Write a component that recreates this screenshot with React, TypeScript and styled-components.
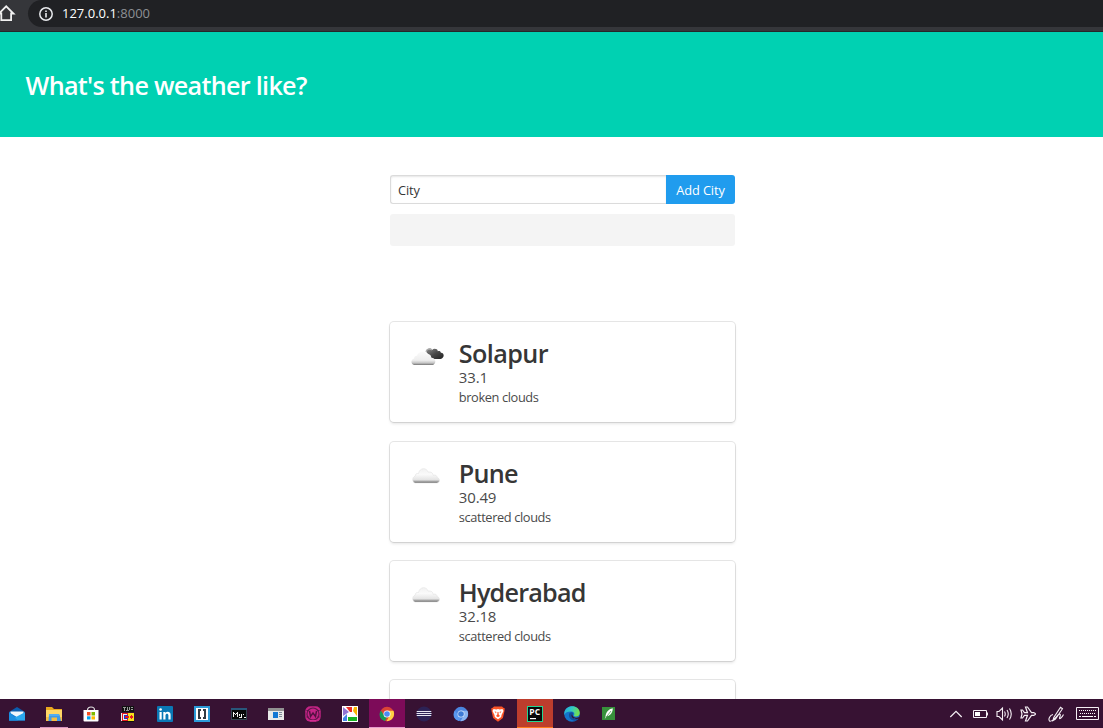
import React from "react";
import styled, { createGlobalStyle } from "styled-components";

const Global = createGlobalStyle`
  * { box-sizing: border-box; }
  html, body { margin: 0; height: 100%; overflow: hidden; }
  body { font-family: "Open Sans", "Noto Sans", sans-serif; background: #fff; color: #4a4a4a; }
  svg { display: block; flex: none; }
`;

const Screen = styled.div`
  width: 1103px;
  height: 728px;
  display: flex;
  flex-direction: column;
  overflow: hidden;
`;

const BrowserBar = styled.div`
  flex: none;
  height: 32px;
  display: flex;
  align-items: flex-start;
  background: #35363a;
  border-bottom: 1px solid #25262a;
`;

const HomeButton = styled.div`
  width: 28px;
  height: 27px;
  padding-top: 4px;
`;

const AddressBar = styled.div`
  flex: 1;
  height: 27px;
  display: flex;
  align-items: center;
  gap: 9px;
  padding-left: 11px;
  background: #202124;
  border-radius: 14px 0 0 14px;
`;

const Address = styled.div`
  font-size: 13px;
  line-height: 18px;
  padding-bottom: 2px;
  letter-spacing: 0;
  color: #fff;
`;

const Port = styled.span`
  color: #8d9094;
`;

const Hero = styled.header`
  flex: none;
  height: 105px;
  display: flex;
  align-items: center;
  padding: 1px 0 0 25.6px;
  background: #00d1b2;
`;

const HeroTitle = styled.h1`
  margin: 0;
  font-size: 25.2px;
  line-height: 29px;
  font-weight: 600;
  letter-spacing: -0.72px;
  color: #fff;
`;

const Page = styled.main`
  flex: 1;
  min-height: 0;
  overflow: hidden;
  display: flex;
  flex-direction: column;
  align-items: center;
  padding: 38px 0 0 22px;
`;

const CityForm = styled.div`
  flex: none;
  width: 345px;
  height: 29px;
  display: flex;
`;

const CityField = styled.div`
  flex: 1;
  border: 1px solid #dbdbdb;
  border-right: 0;
  border-radius: 3px 0 0 3px;
  box-shadow: inset 0 1px 2px rgba(10, 10, 10, 0.1);
  padding: 1px 0 0 7px;
  font-size: 12.8px;
  line-height: 27px;
  letter-spacing: -0.1px;
  color: #363636;
`;

const AddButton = styled.button`
  width: 69px;
  border: 0;
  border-radius: 0 3px 3px 0;
  padding: 1px 0 0;
  background: #209cee;
  color: #fff;
  font: 12.8px/27px "Open Sans", sans-serif;
  letter-spacing: -0.1px;
  white-space: nowrap;
`;

const Notice = styled.div`
  flex: none;
  width: 345px;
  height: 32px;
  margin: 10px 0 76.4px;
  background: #f4f4f4;
  border-radius: 3px;
`;

const CardList = styled.div`
  flex: none;
  width: 345px;
  display: flex;
  flex-direction: column;
  gap: 19.2px;
`;

const Card = styled.article`
  height: 100px;
  display: flex;
  gap: 12.8px;
  padding: 13px 16px;
  background: #fff;
  border-radius: 4px;
  box-shadow: 0 2px 3px rgba(10, 10, 10, 0.1), 0 0 0 1px rgba(10, 10, 10, 0.1);
`;

const CardText = styled.div`
  display: flex;
  flex-direction: column;
`;

const CityName = styled.div<{ $track: number }>`
  font-size: 25.2px;
  line-height: 37px;
  height: 32px;
  font-weight: 600;
  letter-spacing: ${(p) => p.$track}px;
  color: #363636;
`;

const Temperature = styled.div`
  font-size: 15px;
  line-height: 20px;
  height: 22px;
  letter-spacing: -0.15px;
`;

const Conditions = styled.div<{ $track: number }>`
  font-size: 12.8px;
  line-height: 17px;
  letter-spacing: ${(p) => p.$track}px;
`;

const Taskbar = styled.footer`
  flex: none;
  height: 29px;
  display: flex;
  justify-content: space-between;
  background: #371233;
`;

const Apps = styled.div`
  display: flex;
  gap: 1px;
  margin-left: -1px;
`;

const AppSlot = styled.div<{ $bg?: string; $line?: string; $inset?: number }>`
  position: relative;
  width: 36px;
  height: 29px;
  display: flex;
  justify-content: center;
  padding-top: 7px;
  background: ${(p) => p.$bg ?? "transparent"};
  &::after {
    content: "";
    position: absolute;
    left: ${(p) => p.$inset ?? 0}px;
    right: ${(p) => p.$inset ?? 0}px;
    bottom: 0;
    height: 1px;
    background: ${(p) => p.$line ?? "transparent"};
  }
`;

const Tray = styled.div`
  display: flex;
  align-items: center;
  padding-top: 1px;
`;

const TrayItem = styled.div<{ $w: number }>`
  width: ${(p) => p.$w}px;
  display: flex;
  justify-content: center;
`;

const BrokenClouds = () => (
  <svg width="40" height="40" viewBox="0 0 40 40">
    <defs>
      <linearGradient id="bc" x1="0" y1="0" x2="0" y2="1">
        <stop offset="0" stopColor="#fbfbfb" />
        <stop offset=".65" stopColor="#eeeeee" />
        <stop offset=".86" stopColor="#c4c4c4" />
        <stop offset="1" stopColor="#777" />
      </linearGradient>
      <linearGradient id="dk" x1="0" y1="0" x2="1" y2="1">
        <stop offset="0" stopColor="#8a8a8a" />
        <stop offset=".5" stopColor="#484848" />
        <stop offset="1" stopColor="#222" />
      </linearGradient>
    </defs>
    <g transform="translate(.6 .4)">
      <path d="M20 17c-.6-3 3.300-5.600 5.500-2.500 1.500-1.800 5.500-1.400 5.700 1.300 1.900-.5 2.800.2 3.100 1.600 3.400-.2 4.200 5.200-.4 6.200h-5.700c-2.500 0-4.200-2-5.700-4.300z" fill="url(#dk)" />
      <path d="M19.500 16.500c.2-2.600 3.800-4 5.700-2" fill="none" stroke="#aaa" strokeWidth="1.400" />
      <path d="M7.500 29.500c-3.500-.7-3.600-5.700.1-6.500-.1-2 1.300-2.800 2.700-2.500 1-5 8.200-5.500 9.700-1.500 3-.7 5 .9 4.500 3.500 4.400-.5 6 5.600 2 7z" fill="url(#bc)" />
    </g>
  </svg>
);

const ScatteredClouds = () => (
  <svg width="40" height="40" viewBox="0 0 40 40">
    <defs>
      <linearGradient id="sc" x1="0" y1="0" x2="0" y2="1">
        <stop offset="0" stopColor="#f1f1f1" />
        <stop offset=".4" stopColor="#fafafa" />
        <stop offset=".78" stopColor="#e4e4e4" />
        <stop offset=".88" stopColor="#aaa" />
        <stop offset="1" stopColor="#686868" />
      </linearGradient>
    </defs>
    <path d="M9.500 28c-3.500-.5-3.800-5.900-.3-6.800-.2-2 1.600-3.200 3.300-2.700 1.300-6.300 8-6.100 9.700-1.400 2.600-.8 5 1 4.900 3.200 2.500-.8 4.200.5 4 2.300 3.300.7 3 4.900-.1 5.400z" fill="url(#sc)" stroke="#ddd" strokeWidth=".5" />
  </svg>
);

const cities = [
  { name: "Solapur", temp: "33.1", text: "broken clouds", Icon: BrokenClouds, track: -0.6, sub: -0.38 },
  { name: "Pune", temp: "30.49", text: "scattered clouds", Icon: ScatteredClouds, track: -0.8, sub: -0.38 },
  { name: "Hyderabad", temp: "32.18", text: "scattered clouds", Icon: ScatteredClouds, track: -0.8, sub: -0.38 },
];

const Ico = ({ children, crisp }: { children: React.ReactNode; crisp?: boolean }) => (
  <svg width="16" height="16" viewBox="0 0 16 16" shapeRendering={crisp ? "crispEdges" : "auto"}>
    {children}
  </svg>
);

const Mail = () => (
  <Ico>
    <path d="M0 6 8 1l8 5v8.500H0z" fill="#0b5cad" />
    <path d="M1.500 5.500h13v2L8 11.500l-6.500-4z" fill="#eef6fc" />
    <path d="M0 6.300l8 5-8 3.200z" fill="#1683d8" />
    <path d="M16 6.300v8.200H0z" fill="#2aa7ee" />
    <path d="M0 6.300v8.200h9z" fill="#1b8ee0" />
  </Ico>
);
const Folder = () => (
  <Ico>
    <path d="M0 1h6l2 2h8v12H0z" fill="#e9a91f" />
    <path d="M0 4h16v10H0z" fill="#ffd766" />
    <path d="M0 11h16v4H0z" fill="#f5bd42" />
    <path d="M3 8.500h10.500L15 15h-4v-3.500H5.500V15H2.500z" fill="#3e9be8" />
    <path d="M3 8h10v2H3z" fill="#52adf2" />
  </Ico>
);
const Store = () => (
  <Ico>
    <path d="M4.500 4c0-4 7-4 7 0" fill="none" stroke="#ddd" strokeWidth="1.200" />
    <path d="M.5 4h15v10.500q0 1-1 1h-13q-1 0-1-1z" fill="#fff" />
    <path d="M4 6h3.500v3.500H4z" fill="#f25022" />
    <path d="M8.500 6H12v3.500H8.500z" fill="#7fba00" />
    <path d="M4 10.300h3.500v3.200H4z" fill="#00a4ef" />
    <path d="M8.500 10.300H12v3.200H8.500z" fill="#ffb900" />
  </Ico>
);
const TurboC = () => (
  <Ico crisp>
    <path d="M2 0h12v6H2z" fill="#111" />
    <path d="M3 1h3v1H3zM4 2h1v3H4zM7 1h1v3H7zM9 1h1v3H9zM11 1h2v1h-2zM11 3h2v1h-2zM6 4h3v1H6z" fill="#999" />
    <path d="M2 7h12v8H2z" fill="#e31b23" />
    <path d="M8 7h6v8H8z" fill="#f6e11b" />
    <path d="M3 8h4v1H4v4h3v1H3zM1 7h1v8H1z" fill="#eee" />
    <path d="M4 9h4v4H4z" fill="#2332c6" />
    <path d="M5 10h4v2H5zM10 10h1V9h1v1h1v2h-1v1h-1v-1h-1z" fill="#e31b23" />
    <path d="M2 15h12v1H2z" fill="#111" />
  </Ico>
);
const BadgeText = styled.text`
  font-family: "Open Sans", sans-serif;
  font-weight: 700;
`;
const LinkedIn = () => (
  <Ico>
    <rect width="16" height="16" rx="1" fill="#0a78b5" />
    <path d="M2.500 6h2.200v7.500H2.500zM6.300 6h2.100v1c1.400-2 5.200-1.500 5.200 1.700v4.800h-2.200V9.300c0-2.200-2.900-2-2.900 0v4.200H6.300z" fill="#fff" />
    <circle cx="3.600" cy="3.500" r="1.300" fill="#fff" />
  </Ico>
);
const Brackets = () => (
  <Ico crisp>
    <rect width="16" height="16" rx="1" fill="#2b9bd8" />
    <path d="M2 2h12v12H2z" fill="#fff" />
    <path d="M4 3h3v2H6v6h1v2H4zM9 3h3v10H9v-2h1V5H9z" fill="#333b43" />
  </Ico>
);
const MySql = () => (
  <Ico crisp>
    <path d="M0 2h16v12H0z" fill="#08090a" />
    <path d="M0 2h16v2H0z" fill="#28577b" />
    <path d="M0 4h1v9H0zM15 4h1v9h-1zM0 13h16v1H0z" fill="#34434f" />
    <path d="M2 6h1v1h1v1h1V7h1V6h1v5H6V8H5v1H4V8H3v3H2zM8 8h1v2h1V8h1v4H8v-1h2v-1H8zM12 8h1v1h-1zM13 11h2v1h-2z" fill="#f2f2f2" />
  </Ico>
);
const WindowApp = () => (
  <Ico crisp>
    <path d="M0 2h16v12H0z" fill="#e9e9e9" />
    <path d="M0 2h16v3H0z" fill="#929292" />
    <path d="M5 6h5v6H5z" fill="#1477d4" />
    <path d="M11 6h3v1h-3zM11 8h3v1h-3zM11 10h3v1h-3z" fill="#7e8a96" />
  </Ico>
);
const Wamp = () => (
  <Ico>
    <rect x=".3" y=".3" width="15.400" height="15.400" rx="5" fill="#c52486" />
    <circle cx="8" cy="8" r="6" fill="none" stroke="#65154e" strokeWidth="1.200" />
    <path d="M1.500 4.500h2M12.500 4.500h2M1.500 11h2M12.500 11h2" stroke="#5b1748" />
    <path d="M4.500 5l1 5.500L8 7l2.500 3.500 1-5.500" fill="none" stroke="#521041" strokeWidth="1.400" />
    <path d="M5 14.800h6" stroke="#e4369f" />
  </Ico>
);
const Picasa = () => (
  <Ico>
    <path d="M0 0h16v16H0z" fill="#fff" />
    <path d="M1 1l6 5-6 4z" fill="#9274d4" />
    <path d="M4 1h6v5L8 6z" fill="#ee2d24" />
    <path d="M12 1h3v9l-4-5z" fill="#f7b500" />
    <path d="M1 15v-3l4-4v7z" fill="#4385e9" />
    <path d="M6 11h9v4H6z" fill="#18b524" />
  </Ico>
);
const ChromeLogo = ({ mono }: { mono?: boolean }) => (
  <Ico>
    <circle cx="8" cy="8" r="7.200" fill={mono ? "#4a85df" : "#db4437"} />
    <path d="M1.800 4.400 5.200 9.600 8 11l-2 4C.8 14-.8 8.500 1.800 4.400z" fill={mono ? "#5a98ef" : "#169b59"} />
    <path d="M8 4.800h6.500c2 5-1.500 10.300-7 10.400l3.200-5.600z" fill={mono ? "#8bb5f2" : "#ffcf44"} />
    <circle cx="8" cy="8" r="3.500" fill={mono ? "#d6e6fc" : "#fff"} />
    <circle cx="8" cy="8" r="2.800" fill={mono ? "#3e7bd7" : "#4c8bf5"} />
  </Ico>
);
const Eclipse = () => (
  <Ico>
    <circle cx="8" cy="8" r="7.500" fill="#2c2255" />
    <path d="M.7 5.500h14.600M.5 7.500h15M.7 9.500h14.600" stroke="#e6e5f2" strokeWidth="1" />
  </Ico>
);
const Brave = () => (
  <Ico>
    <path d="M4 .5h8l1.300 1.300 1.400.4-.2 2.700L12.900 12 8 15.800 3.100 12 1.500 4.900l-.2-2.700 1.400-.4z" fill="#fb5427" />
    <path d="M3.500 3l2.800.5L8 3l1.700.5 2.800-.5 1 2-2 4-.3 2L8 13.200 4.800 11l-.3-2-2-4z" fill="#fff" />
    <path d="M4.500 5.300l2 .7-.6 1.200zM11.500 5.300l-2 .7.6 1.200zM7.500 6h1l.2 2.500L10 10l-2 1.200L6 10l1.300-1.500z" fill="#fb5427" />
  </Ico>
);
const PyCharm = () => (
  <Ico>
    <path d="M0 0h16v16H0z" fill="#22d692" />
    <path d="M1 1h14v14H1z" fill="#090909" />
    <BadgeText x="2.300" y="8.800" fontSize="8.500">
      <tspan fill="#fff">PC</tspan>
    </BadgeText>
    <path d="M3 12h6v1.200H3z" fill="#fff" />
  </Ico>
);
const Edge = () => (
  <Ico>
    <defs>
      <linearGradient id="ed" x1="0" x2="1" y1="0" y2=".3">
        <stop offset="0" stopColor="#23a7df" />
        <stop offset=".5" stopColor="#31c9c5" />
        <stop offset="1" stopColor="#70de55" />
      </linearGradient>
    </defs>
    <circle cx="8" cy="8" r="7.800" fill="#1474cc" />
    <path d="M.3 7C1-2.200 15.800-2 15.800 7c0 3.500-4.500 4.300-6.200 2.800 1.500-1.500.5-4.200-2-4.200C4.500 5.400 1.500 6 .3 9z" fill="url(#ed)" />
    <path d="M5.500 7c-1.600 2.800.2 7.300 5 7.700 2 0 3.500-1.200 4.500-2.500-3.500 1.200-6.700.2-6.600-2.900 0-1.200.6-1.500 1-1.800C8.700 6 6.500 6 5.500 7z" fill="#124f9c" />
    <path d="M8.300 8.200c0 3 3.500 4.300 7 2.800l.7 1.300C12 13.600 7.300 12.800 7.500 9z" fill="#371233" />
  </Ico>
);
const Feather = () => (
  <Ico>
    <path d="M1 1h13v13H1z" fill="#37903b" />
    <path d="M4.500 11C4.500 6.500 7.500 3 11.700 2.200 12 6 9.500 9.400 5.900 10.300L3.700 13z" fill="#fff" />
    <path d="M5.300 11 10 5" stroke="#37903b" strokeWidth=".7" />
  </Ico>
);

const line = { fill: "none", stroke: "#f5eff4", strokeWidth: 1.2 };

export default function App() {
  return (
    <>
      <Global />
      <Screen>
        <BrowserBar>
          <HomeButton>
            <svg width="16" height="18" viewBox="0 0 16 18">
              <path d="M-1 9.500 6.200 2.300l7.300 7.200h-2.400v6.700H1.300V9.500z" fill="none" stroke="#f1f1f1" strokeWidth="1.800" />
            </svg>
          </HomeButton>
          <AddressBar>
            <svg width="14" height="14" viewBox="0 0 14 14">
              <circle cx="7" cy="7" r="6.200" fill="none" stroke="#e8eaed" strokeWidth="1.500" />
              <path d="M6.200 6h1.600v4.500H6.200zM6.200 3.400h1.600v1.500H6.200z" fill="#e8eaed" />
            </svg>
            <Address>127.0.0.1<Port>:8000</Port></Address>
          </AddressBar>
        </BrowserBar>
        <Hero>
          <HeroTitle>What's the weather like?</HeroTitle>
        </Hero>
        <Page>
          <CityForm>
            <CityField>City</CityField>
            <AddButton>Add City</AddButton>
          </CityForm>
          <Notice />
          <CardList>
            {cities.map(({ name, temp, text, Icon, track, sub }) => (
              <Card key={name}>
                <Icon />
                <CardText>
                  <CityName $track={track}>{name}</CityName>
                  <Temperature>{temp}</Temperature>
                  <Conditions $track={sub}>{text}</Conditions>
                </CardText>
              </Card>
            ))}
            <Card />
          </CardList>
        </Page>
        <Taskbar>
          <Apps>
            <AppSlot><Mail /></AppSlot>
            <AppSlot $line="#d593bd" $inset={4}><Folder /></AppSlot>
            <AppSlot><Store /></AppSlot>
            <AppSlot><TurboC /></AppSlot>
            <AppSlot><LinkedIn /></AppSlot>
            <AppSlot><Brackets /></AppSlot>
            <AppSlot><MySql /></AppSlot>
            <AppSlot><WindowApp /></AppSlot>
            <AppSlot><Wamp /></AppSlot>
            <AppSlot><Picasa /></AppSlot>
            <AppSlot $bg="#7d0b59" $line="#e59bcb"><ChromeLogo /></AppSlot>
            <AppSlot><Eclipse /></AppSlot>
            <AppSlot><ChromeLogo mono /></AppSlot>
            <AppSlot><Brave /></AppSlot>
            <AppSlot $bg="#bd3d2d" $line="#ff7a1c"><PyCharm /></AppSlot>
            <AppSlot><Edge /></AppSlot>
            <AppSlot><Feather /></AppSlot>
          </Apps>
          <Tray>
            <TrayItem $w={24}>
              <svg width="14" height="10" viewBox="0 0 14 10"><path d="M1.300 8 7 2.300 12.700 8" {...line} /></svg>
            </TrayItem>
            <TrayItem $w={25}>
              <svg width="16" height="10" viewBox="0 0 16 10">
                <path d="M.5 1.500h13v7H.5zM14.500 3.500v3" {...line} strokeWidth="1" />
                <path d="M2 3h5v4H2z" fill="#fff" />
              </svg>
            </TrayItem>
            <TrayItem $w={23}>
              <svg width="17" height="16" viewBox="0 0 17 16">
                <path d="M1 5.500h2L6.500 2v12L3 10.500H1zM8.500 5.500q1.500 2.500 0 5M11 4q2.500 4 0 8M13.500 2.500q3.500 5.500 0 11" {...line} strokeWidth="1.100" />
              </svg>
            </TrayItem>
            <TrayItem $w={25}>
              <svg width="17" height="16" viewBox="0 0 17 16">
                <path d="M1 4h1.500l2 2.700h3L5.500 1h2l4 5.700H14q3 1.300 0 2.600h-2.500l-4 5.700h-2l2-5.700h-3L2.500 12H1l1-4z" {...line} />
              </svg>
            </TrayItem>
            <TrayItem $w={31}>
              <svg width="17" height="17" viewBox="0 0 17 17">
                <path d="M5 14.500l.8-3L12.500 1.200l2 1.500L7.500 13zM5 8.500c-3 .5-5 4.500-3.500 6.500 3 1.500 6.500-4.500 9-6.500 3-1.500 1.500 2 1 3.500-.3 1.500 2 .5 4-3.500" {...line} strokeWidth="1.100" />
              </svg>
            </TrayItem>
            <TrayItem $w={31}>
              <svg width="24" height="14" viewBox="0 0 24 14">
                <path d="M.5.5h22v12H.5z" {...line} strokeWidth="1" />
                <path d="M3 3.500h17M4 6.500h16" stroke="#fff" strokeDasharray="1 1" />
                <path d="M3 9.500h2M6 9.500h11M18 9.500h2" stroke="#fff" />
              </svg>
            </TrayItem>
          </Tray>
        </Taskbar>
      </Screen>
    </>
  );
}
